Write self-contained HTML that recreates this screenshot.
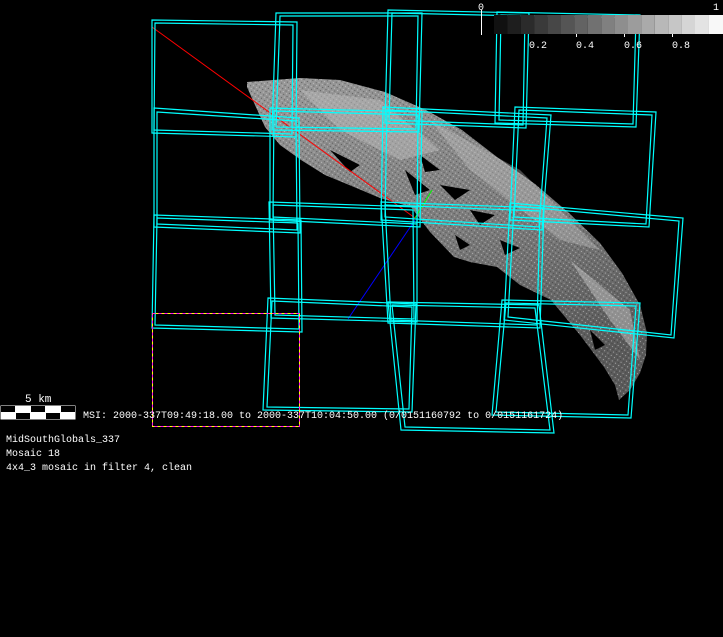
<!DOCTYPE html>
<html><head><meta charset="utf-8"><style>
html,body{margin:0;padding:0;background:#000;width:723px;height:637px;overflow:hidden}
svg{display:block}
text{font-family:"Liberation Mono",monospace;font-size:10px;fill:#fff}
</style></head><body>
<svg width="723" height="637" viewBox="0 0 723 637" xmlns="http://www.w3.org/2000/svg">
<rect width="723" height="637" fill="#000"/>
<defs>
<linearGradient id="ag" x1="0" y1="0" x2="0.3" y2="1">
<stop offset="0" stop-color="#9a9a9a"/><stop offset="0.6" stop-color="#7a7a7a"/><stop offset="1" stop-color="#5a5a5a"/>
</linearGradient>
<pattern id="pt" width="4" height="4" patternUnits="userSpaceOnUse" patternTransform="rotate(35)">
<rect width="1" height="1" fill="#ddd" opacity="0.6"/><rect x="2" y="2" width="1" height="1" fill="#333" opacity="0.6"/>
</pattern>
</defs>
<polygon points="247,82 300,78 340,80 385,92 426,110 462,130 497,157 535,184 569,213 600,243 622,273 640,305 647,333 646,355 640,373 630,390 619,400 615,385 604,367 580,335 551,300 520,285 497,267 470,262 454,257 430,232 411,207 380,198 354,187 325,175 301,160 280,145 265,127 255,105 247,87" fill="url(#ag)"/>
<polygon points="247,82 300,78 340,80 385,92 426,110 462,130 497,157 535,184 569,213 600,243 622,273 640,305 647,333 646,355 640,373 630,390 619,400 615,385 604,367 580,335 551,300 520,285 497,267 470,262 454,257 430,232 411,207 380,198 354,187 325,175 301,160 280,145 265,127 255,105 247,87" fill="url(#pt)"/>
<polygon points="300,90 380,100 440,150 400,160 340,130" fill="#bbb" opacity="0.5"/>
<polygon points="430,120 520,170 600,250 560,240 470,170" fill="#ccc" opacity="0.35"/>
<polygon points="570,260 630,310 640,360 610,320" fill="#ddd" opacity="0.4"/>
<g fill="#000">
<polygon points="330,150 360,165 350,172"/><polygon points="405,170 430,190 415,195"/>
<polygon points="455,235 470,245 460,250"/><polygon points="500,240 520,248 505,255"/>
<polygon points="420,155 440,170 425,172"/><polygon points="440,185 470,190 455,200"/>
<polygon points="470,210 495,215 480,225"/><polygon points="590,330 605,345 595,350"/>
</g>
<line x1="152" y1="27" x2="415" y2="218" stroke="#f00" stroke-width="1"/>
<line x1="348" y1="319" x2="415" y2="220" stroke="#00f" stroke-width="1"/>
<line x1="415" y1="218" x2="432" y2="190" stroke="#0f0" stroke-width="1"/>
<g fill="none" stroke="#0ff" stroke-width="1.2">
<polygon points="152,20 297,22 296,137 152,133"/><polygon points="155,23 293,25 292,134 154,130"/>
<polygon points="276,13 422,13 419,132 272,130"/><polygon points="280,16 418,16 416,129 276,127"/>
<polygon points="388,10 529,13 526,128 385,123"/><polygon points="392,13 525,16 523,125 389,120"/>
<polygon points="497,12 640,15 636,127 495,123"/><polygon points="501,15 636,18 633,124 499,120"/>
<polygon points="154,108 299,118 300,233 154,227"/><polygon points="157,112 296,121 297,230 157,224"/>
<polygon points="270,108 422,112 420,227 270,220"/><polygon points="274,111 418,115 417,224 273,217"/>
<polygon points="383,107 551,115 542,230 381,220"/><polygon points="387,110 547,118 539,227 385,217"/>
<polygon points="515,107 656,112 649,227 510,220"/><polygon points="519,110 652,115 646,224 514,217"/>
<polygon points="154,215 301,220 302,332 152,328"/><polygon points="157,218 298,223 299,329 155,325"/>
<polygon points="269,202 417,207 417,322 271,318"/><polygon points="273,205 413,210 414,319 275,315"/>
<polygon points="381,202 544,208 540,328 388,323"/><polygon points="385,205 540,211 537,325 391,320"/>
<polygon points="510,203 683,218 674,338 504,320"/><polygon points="514,206 679,221 671,335 508,317"/>
<polygon points="268,298 416,304 412,412 263,410"/><polygon points="272,301 412,307 409,409 267,407"/>
<polygon points="388,302 539,305 554,433 401,430"/><polygon points="392,305 535,308 550,430 405,427"/>
<polygon points="502,300 640,303 631,418 492,415"/><polygon points="506,303 636,306 628,415 496,412"/>
</g>
<rect x="152.5" y="313.5" width="147" height="113" fill="none" stroke="#ff0" stroke-width="1"/>
<rect x="152.5" y="313.5" width="147" height="113" fill="none" stroke="#f0f" stroke-width="1" stroke-dasharray="3,3"/>
<g>
<rect x="494" y="15" width="13.4" height="19" fill="#111"/>
<rect x="507.4" y="15" width="13.4" height="19" fill="#1e1e1e"/>
<rect x="520.8" y="15" width="13.4" height="19" fill="#2b2b2b"/>
<rect x="534.2" y="15" width="13.4" height="19" fill="#3a3a3a"/>
<rect x="547.6" y="15" width="13.4" height="19" fill="#474747"/>
<rect x="561" y="15" width="13.4" height="19" fill="#555"/>
<rect x="574.4" y="15" width="13.4" height="19" fill="#636363"/>
<rect x="587.8" y="15" width="13.4" height="19" fill="#717171"/>
<rect x="601.2" y="15" width="13.4" height="19" fill="#808080"/>
<rect x="614.6" y="15" width="13.4" height="19" fill="#8e8e8e"/>
<rect x="628" y="15" width="13.4" height="19" fill="#9c9c9c"/>
<rect x="641.4" y="15" width="13.4" height="19" fill="#aaa"/>
<rect x="654.8" y="15" width="13.4" height="19" fill="#b8b8b8"/>
<rect x="668.2" y="15" width="13.4" height="19" fill="#c6c6c6"/>
<rect x="681.6" y="15" width="13.4" height="19" fill="#d5d5d5"/>
<rect x="695" y="15" width="13.4" height="19" fill="#e3e3e3"/>
<rect x="708.4" y="15" width="14.6" height="19" fill="#f8f8f8"/>
</g>
<line x1="481.5" y1="10" x2="481.5" y2="35" stroke="#fff"/>
<line x1="576.5" y1="34" x2="576.5" y2="37" stroke="#fff"/>
<line x1="624.5" y1="34" x2="624.5" y2="37" stroke="#fff"/>
<line x1="672.5" y1="34" x2="672.5" y2="37" stroke="#fff"/>
<text x="478" y="10">0</text>
<text x="713" y="10">1</text>
<text x="529" y="48">0.2</text>
<text x="576" y="48">0.4</text>
<text x="624" y="48">0.6</text>
<text x="672" y="48">0.8</text>
<rect x="0.5" y="405.5" width="75" height="14" fill="#fff"/>
<rect x="1" y="406" width="14" height="6" fill="#000"/>
<rect x="31" y="406" width="14" height="6" fill="#000"/>
<rect x="61" y="406" width="14" height="6" fill="#000"/>
<rect x="16" y="413" width="14" height="6" fill="#000"/>
<rect x="46" y="413" width="14" height="6" fill="#000"/>
<text x="25" y="402" style="font-size:11px">5 km</text>
<text x="83" y="418">MSI:  2000-337T09:49:18.00 to 2000-337T10:04:50.00 (0/0151160792 to 0/0151161724)</text>
<text x="6" y="442">MidSouthGlobals_337</text>
<text x="6" y="456">Mosaic 18</text>
<text x="6" y="470">4x4_3 mosaic in filter 4, clean</text>
</svg>
</body></html>
